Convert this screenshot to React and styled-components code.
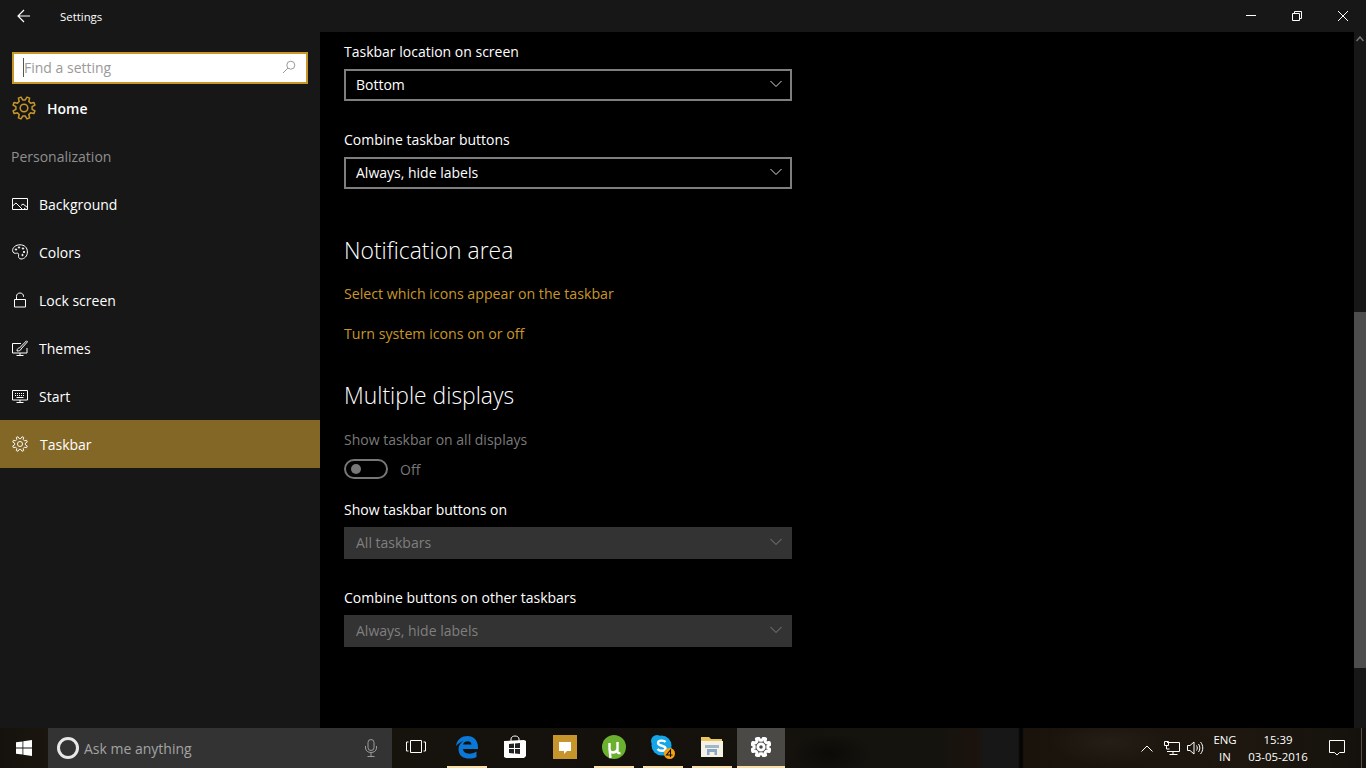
import styled, { createGlobalStyle } from "styled-components";

const GlobalStyle = createGlobalStyle`
  html, body {
    margin: 0;
    padding: 0;
    height: 100%;
    background: #000;
    overflow: hidden;
  }
  #root {
    height: 100%;
  }
  * {
    box-sizing: border-box;
  }
`;

const Page = styled.div`
  display: flex;
  flex-direction: column;
  width: 1366px;
  height: 768px;
  font-family: "Open Sans", "Noto Sans", sans-serif;
  font-size: 14px;
  color: #fff;
`;

const TitleBar = styled.div`
  display: flex;
  align-items: center;
  flex: 0 0 32px;
  background: #171717;
`;

const BackButton = styled.div`
  display: flex;
  align-items: center;
  justify-content: center;
  width: 48px;
  height: 32px;
`;

const AppTitle = styled.span`
  margin-left: 12px;
  font-size: 11.4px;
  flex: 1;
`;

const WindowButton = styled.div`
  display: flex;
  align-items: center;
  justify-content: center;
  width: 46px;
  height: 32px;
`;

const Main = styled.div`
  display: flex;
  flex: 1;
  min-height: 0;
`;

const Sidebar = styled.nav`
  flex: 0 0 320px;
  background: #171717;
  padding-top: 20px;
`;

const SearchBox = styled.div`
  display: flex;
  align-items: center;
  justify-content: space-between;
  height: 32px;
  margin: 0 12px;
  padding: 0 10px 2px 9px;
  background: #fff;
  border: 2px solid #c8962a;
`;

const SearchHint = styled.span`
  border-left: 1px solid #555;
  font-size: 14px;
  line-height: 19px;
  color: #9a9a9a;
`;

const HomeRow = styled.div`
  display: flex;
  align-items: center;
  gap: 11px;
  height: 48px;
  padding-left: 12px;
  font-size: 14px;
  font-weight: 600;
`;

const GroupTitle = styled.div`
  height: 48px;
  padding-left: 11px;
  font-size: 14px;
  line-height: 50px;
  color: #8f8f8f;
`;

const NavItem = styled.div`
  display: flex;
  align-items: center;
  gap: ${({ $active }) => ($active ? 12 : 11)}px;
  height: 48px;
  padding-left: 12px;
  background: ${({ $active }) => ($active ? "#836726" : "transparent")};
`;

const NavIcon = styled.svg`
  width: 16px;
  height: 16px;
  flex: none;
  fill: none;
  stroke: #fff;
  stroke-width: 1;
`;

const Content = styled.main`
  flex: 1;
  padding: 9px 0 0 24px;
  background: #000;
`;

const Label = styled.div`
  height: 20px;
  margin-top: ${({ $top }) => $top || 0}px;
  line-height: 22px;
  color: ${({ $dim }) => ($dim ? "#7a7a7a" : "#fff")};
`;

const Select = styled.div`
  display: flex;
  align-items: center;
  justify-content: space-between;
  width: 448px;
  height: 32px;
  margin-top: 8px;
  padding: 0 8px 2px 10px;
  color: ${({ $disabled }) => ($disabled ? "#7f7f7f" : "#fff")};
  background: ${({ $disabled }) => ($disabled ? "#333" : "#000")};
  border: 2px solid ${({ $disabled }) => ($disabled ? "#333" : "#7e7e7e")};
`;

const Heading = styled.h2`
  margin: ${({ $top }) => $top}px 0 0;
  font-size: 22.9px;
  font-weight: 300;
  line-height: 32px;
`;

const SettingLink = styled.a`
  display: block;
  height: 20px;
  margin-top: ${({ $top }) => $top}px;
  font-size: 14.2px;
  line-height: 22px;
  color: #c8962a;
`;

const ToggleRow = styled.div`
  display: flex;
  align-items: center;
  gap: 12px;
  height: 20px;
  margin-top: 10px;
  color: #777;
`;

const ToggleTrack = styled.span`
  display: flex;
  align-items: center;
  width: 44px;
  height: 20px;
  padding-left: 5px;
  border: 2px solid #777;
  border-radius: 10px;
`;

const ToggleKnob = styled.span`
  width: 10px;
  height: 10px;
  border-radius: 50%;
  background: #777;
`;

const ScrollTrack = styled.div`
  display: flex;
  flex-direction: column;
  flex: 0 0 12px;
  background: #171717;
`;

const ScrollArrow = styled.div`
  display: flex;
  justify-content: center;
  padding-top: 4px;
  height: 12px;
`;

const ScrollThumb = styled.div`
  height: 356px;
  margin-top: 268px;
  background: #4d4d4d;
`;

// wallpaper showing through the taskbar
const Taskbar = styled.footer`
  display: flex;
  align-items: stretch;
  flex: 0 0 40px;
  background:
    radial-gradient(ellipse 60px 24px at 1110px 14px, #241e16 0%, transparent 100%),
    radial-gradient(ellipse 40px 20px at 830px 26px, #0c0a07 0%, transparent 100%),
    linear-gradient(
      90deg,
      #15120d 0,
      #1a150e 48px,
      #14110c 600px,
      #15130e 940px,
      #1b120c 975px,
      #171717 985px,
      #171717 1018px,
      #050505 1020px,
      #050505 1022px,
      #1a130c 1024px,
      #1d170f 1240px,
      #14110c 1366px
    );
`;

const StartButton = styled.div`
  display: flex;
  align-items: center;
  justify-content: center;
  flex: 0 0 48px;
`;

const CortanaBox = styled.div`
  display: flex;
  align-items: center;
  flex: 0 0 344px;
  padding: 0 14px 0 9px;
  background: #333;
  color: #a3a3a3;
`;

const CortanaRing = styled.span`
  width: 22px;
  height: 22px;
  margin-right: 5px;
  border: 3px solid #e8e8e8;
  border-radius: 50%;
`;

const CortanaHint = styled.span`
  flex: 1;
`;

const TaskButton = styled.div`
  display: flex;
  align-items: center;
  justify-content: center;
  flex: 0 0 ${({ $width }) => $width || 48}px;
  margin-left: ${({ $gap }) => $gap || 0}px;
  background: ${({ $active }) => ($active ? "#4a4946" : "transparent")};
  border-bottom: 2px solid ${({ $running }) => ($running ? "#fbdda6" : "transparent")};
`;

const Tray = styled.div`
  display: flex;
  align-items: center;
  margin-left: auto;
  font-size: 11.4px;
`;

const TrayIcon = styled.div`
  display: flex;
  align-items: center;
  justify-content: center;
  width: ${({ $width }) => $width}px;
`;

const TrayText = styled.div`
  width: ${({ $width }) => $width}px;
  line-height: 17px;
  text-align: center;
`;

const DesktopEdge = styled.div`
  width: 1px;
  height: 40px;
  margin-right: 4px;
  background: #55524c;
`;

function gearPath(c, outer, inner) {
  const teeth = 8;
  const step = (Math.PI * 2) / teeth;
  let d = "";
  for (let i = 0; i < teeth; i++) {
    const a = i * step + step / 2;
    const pts = [
      [inner, a - step * 0.3],
      [outer, a - step * 0.16],
      [outer, a + step * 0.16],
      [inner, a + step * 0.3],
    ];
    pts.forEach(([r, t], j) => {
      const x = (c + r * Math.cos(t)).toFixed(2);
      const y = (c + r * Math.sin(t)).toFixed(2);
      d += `${i === 0 && j === 0 ? "M" : "L"}${x} ${y} `;
    });
  }
  return d + "Z";
}

function Gear({ size, color, width = 1 }) {
  return (
    <svg width={size} height={size} viewBox="0 0 24 24" fill="none" stroke={color} strokeWidth={width} strokeLinejoin="round">
      <path d={gearPath(12, 11.3, 8.2)} />
      <circle cx="12" cy="12" r="3.8" />
    </svg>
  );
}

function BackIcon() {
  return (
    <svg width="14" height="14" viewBox="0 0 14 14" fill="none" stroke="#fff" strokeWidth="1.2">
      <path d="M1 7h12M7 1L1 7l6 6" />
    </svg>
  );
}

function SearchIcon() {
  return (
    <svg width="14" height="14" viewBox="0 0 14 14" fill="none" stroke="#9a9a9a" strokeWidth="1">
      <circle cx="8.8" cy="5.2" r="4" />
      <path d="M6 8L1 13" />
    </svg>
  );
}

function Chevron({ color }) {
  return (
    <svg width="12" height="8" viewBox="0 0 12 8" fill="none" stroke={color} strokeWidth="1">
      <path d="M.5 1L6 6.5 11.500 1" />
    </svg>
  );
}

const navItems = [
  {
    label: "Background",
    icon: (
      <NavIcon viewBox="0 0 16 16">
        <path d="M.5 2.500h15v11H.5z" />
        <path d="M.5 10l3.500-3 6 6M9 9.500l2-1.500 4.500 3.500M12 12l2 1.500" />
      </NavIcon>
    ),
  },
  {
    label: "Colors",
    icon: (
      <NavIcon viewBox="0 0 16 16">
        <path d="M8 .8C3.600.8.600 3.400.600 6.600c0 2.600 2.400 3 4 2.600 1.400-.3 2.400.5 2 1.900-.5 1.800.4 3.900 2.400 3.900 3.500 0 6.400-3 6.400-7C15.400 3.500 12.400.8 8 .8z" />
        <circle cx="4" cy="5.500" r=".7" fill="#fff" />
        <circle cx="7" cy="3.500" r=".7" fill="#fff" />
        <circle cx="11" cy="4.500" r=".7" fill="#fff" />
        <circle cx="12" cy="8" r=".7" fill="#fff" />
        <circle cx="10.500" cy="11" r=".7" fill="#fff" />
      </NavIcon>
    ),
  },
  {
    label: "Lock screen",
    icon: (
      <NavIcon viewBox="0 0 16 16">
        <path d="M2.500 7.500h11v7.500h-11z" />
        <path d="M4.500 7.500V4.300C4.500 2.300 6 1 8 1s3.500 1.300 3.500 3.300v.7" />
      </NavIcon>
    ),
  },
  {
    label: "Themes",
    icon: (
      <NavIcon viewBox="0 0 16 16">
        <path d="M9 3.500H.5v9.500h14.500V8M8 13v2M4.500 15.500h7" />
        <path d="M5 11c0-2 1-3 2.500-3L14.500.8l1 1L9 9c0 1.500-2 2-4 2z" />
      </NavIcon>
    ),
  },
  {
    label: "Start",
    icon: (
      <NavIcon viewBox="0 0 16 16">
        <path d="M.5 2.500h15v9.500H.5zM8 12v2.500M4.500 14.500h7" />
        <path d="M3 5.500h10M3 7.500h10" strokeDasharray="1 1" />
        <path d="M4.500 9.500h7" />
      </NavIcon>
    ),
  },
];

function EdgeIcon() {
  return (
    <svg width="24" height="24" viewBox="0 0 24 24">
      <path fill="#0a78d7" d="M1 11C2 4 7 1 12.500 1 19 1 23.500 5.500 23 14H8c.3 4.500 7 6.500 13.500 2.500v5.500c-6 3-18 2.500-18-8 0-3.500 2-6 5-8-2.500.8-6 3-7.500 5zM8 9.500h8.500C16.500 5 9 5 8 9.500z" />
    </svg>
  );
}

function StoreIcon() {
  return (
    <svg width="22" height="24" viewBox="0 0 22 24">
      <path fill="none" stroke="#fff" d="M7 6V4c0-4 8-4 8 0v2" />
      <path fill="#fff" d="M0 6l20-1 2 1v15l-2 2H2l-2-1z" />
      <path fill="#222" d="M5 9l5-.5V13H5zM11 8.500l5-.5v5h-5zM5 14h5v4.500l-5-.5zM11 14h5v5l-5-.5z" />
    </svg>
  );
}

function ChatIcon() {
  return (
    <svg width="24" height="24" viewBox="0 0 24 24">
      <rect width="24" height="24" fill="#c6962c" />
      <path fill="#fff" d="M6 7h12v9h-4l-3 3v-3H6z" />
    </svg>
  );
}

function TorrentIcon() {
  return (
    <svg width="24" height="24" viewBox="0 0 24 24">
      <circle cx="12" cy="12" r="12" fill="#6bb02f" />
      <path fill="none" stroke="#fff" strokeWidth="2.400" d="M7.500 8v6c0 4.500 6.500 4.500 8 .5V7M7.500 14l1 9M15.500 7v9c0 2 1 2.500 3 2" />
    </svg>
  );
}

function SkypeIcon() {
  return (
    <svg width="26" height="26" viewBox="0 0 26 26">
      <circle cx="7" cy="7" r="6" fill="#14a6e6" />
      <circle cx="16" cy="16" r="6" fill="#14a6e6" />
      <circle cx="11.500" cy="11.500" r="10" fill="#14a6e6" />
      <path fill="none" stroke="#fff" strokeWidth="2.400" d="M15.500 8C14 6 8 6 8 9c0 3.500 7.500 2 7.500 5.500 0 3-6 3-8 .5" />
      <circle cx="19.500" cy="19.500" r="5.500" fill="#f7a20e" />
      <path fill="none" stroke="#111" strokeWidth="1.100" d="M20.500 23v-7l-4 5h6" />
    </svg>
  );
}

function ExplorerIcon() {
  return (
    <svg width="24" height="24" viewBox="0 0 24 24">
      <path fill="#eac65c" d="M1 2h8l2 2h11v4H1z" />
      <path fill="#f5f1e4" d="M1 6h22v16H1z" />
      <path fill="#88a6c8" d="M7 20v-6h10v6h-2.500v-3h-5v3z" />
      <path fill="#a3b5c8" d="M5 10h14v3H5z" />
    </svg>
  );
}

export default function App() {
  return (
    <Page>
      <GlobalStyle />
      <TitleBar>
        <BackButton>
          <BackIcon />
        </BackButton>
        <AppTitle>Settings</AppTitle>
        <WindowButton>
          <svg width="10" height="2" viewBox="0 0 10 2"><path d="M0 .5h10" stroke="#fff" /></svg>
        </WindowButton>
        <WindowButton>
          <svg width="10" height="10" viewBox="0 0 10 10" fill="none" stroke="#fff">
            <path d="M.5 2.500h7v7h-7zM2.500 2.500V.5h7v7h-2" />
          </svg>
        </WindowButton>
        <WindowButton>
          <svg width="10" height="10" viewBox="0 0 10 10" fill="none" stroke="#fff">
            <path d="M0 0l10 10M10 0L0 10" />
          </svg>
        </WindowButton>
      </TitleBar>

      <Main>
        <Sidebar>
          <SearchBox>
            <SearchHint>Find a setting</SearchHint>
            <SearchIcon />
          </SearchBox>
          <HomeRow>
            <Gear size={24} color="#c8962a" width={1.5} />
            Home
          </HomeRow>
          <GroupTitle>Personalization</GroupTitle>
          {navItems.map((item) => (
            <NavItem key={item.label}>
              {item.icon}
              {item.label}
            </NavItem>
          ))}
          <NavItem $active>
            <Gear size={16} color="#fff" width={1.4} />
            Taskbar
          </NavItem>
        </Sidebar>

        <Content>
          <Label>Taskbar location on screen</Label>
          <Select>
            Bottom
            <Chevron color="#d8d8d8" />
          </Select>
          <Label $top={28}>Combine taskbar buttons</Label>
          <Select>
            Always, hide labels
            <Chevron color="#d8d8d8" />
          </Select>

          <Heading $top={46}>Notification area</Heading>
          <SettingLink $top={16}>Select which icons appear on the taskbar</SettingLink>
          <SettingLink $top={20}>Turn system icons on or off</SettingLink>

          <Heading $top={37}>Multiple displays</Heading>
          <Label $top={17} $dim>Show taskbar on all displays</Label>
          <ToggleRow>
            <ToggleTrack>
              <ToggleKnob />
            </ToggleTrack>
            Off
          </ToggleRow>
          <Label $top={20}>Show taskbar buttons on</Label>
          <Select $disabled>
            All taskbars
            <Chevron color="#7f7f7f" />
          </Select>
          <Label $top={28}>Combine buttons on other taskbars</Label>
          <Select $disabled>
            Always, hide labels
            <Chevron color="#7f7f7f" />
          </Select>
        </Content>

        <ScrollTrack>
          <ScrollArrow>
            <svg width="8" height="6" viewBox="0 0 8 6" fill="none" stroke="#777" strokeWidth="1.500">
              <path d="M.5 5L4 1l3.500 4" />
            </svg>
          </ScrollArrow>
          <ScrollThumb />
        </ScrollTrack>
      </Main>

      <Taskbar>
        <StartButton>
          <svg width="16" height="16" viewBox="0 0 16 16" fill="#fff">
            <path d="M0 2.300l6.500-.9v6.200H0zM7.300 1.300L16 0v7.600H7.300zM0 8.400h6.500v6.200L0 13.700zM7.300 8.400H16V16l-8.700-1.300z" />
          </svg>
        </StartButton>
        <CortanaBox>
          <CortanaRing />
          <CortanaHint>Ask me anything</CortanaHint>
          <svg width="14" height="18" viewBox="0 0 14 18" fill="none" stroke="#9a9a9a">
            <rect x="4" y=".5" width="6" height="11" rx="3" />
            <path d="M1.500 7v2c0 6 11 6 11 0V7M7 14v3M3.500 17.500h7" />
          </svg>
        </CortanaBox>
        <TaskButton>
          <svg width="20" height="14" viewBox="0 0 20 14" fill="none" stroke="#fff">
            <path d="M4.500.5h11v12h-11zM2.500 2H.5v9h2M17.500 2h2v9h-2" />
          </svg>
        </TaskButton>
        <TaskButton $running $gap={7} $width={40}>
          <EdgeIcon />
        </TaskButton>
        <TaskButton $width={56}>
          <StoreIcon />
        </TaskButton>
        <TaskButton $width={44}>
          <ChatIcon />
        </TaskButton>
        <TaskButton $running $gap={7} $width={40}>
          <TorrentIcon />
        </TaskButton>
        <TaskButton $running $gap={9} $width={40}>
          <SkypeIcon />
        </TaskButton>
        <TaskButton $running $gap={9} $width={40}>
          <ExplorerIcon />
        </TaskButton>
        <TaskButton $running $active $gap={5}>
          <Gear size={20} color="#fff" width={3.4} />
        </TaskButton>

        <Tray>
          <TrayIcon $width={24}>
            <svg width="12" height="7" viewBox="0 0 12 7" fill="none" stroke="#fff">
              <path d="M.5 6.500L6 1l5.500 5.500" />
            </svg>
          </TrayIcon>
          <TrayIcon $width={25}>
            <svg width="16" height="14" viewBox="0 0 16 14" fill="none" stroke="#fff">
              <path d="M3 1.500h12.500v9h-12.500M9 10.500v3M5.500 13.500h8M.5.500h4v4h-4zM2.500 4.500V8h3" />
            </svg>
          </TrayIcon>
          <TrayIcon $width={22}>
            <svg width="17" height="14" viewBox="0 0 17 14" fill="none" stroke="#fff">
              <path d="M.5 4.500h2.500L7 1v12L3 9.500H.5zM9.500 4.500c1 1.500 1 3.500 0 5M11.500 3c1.800 2.500 1.800 5.500 0 8M13.500 1c3 3.500 3 8.500 0 12" />
            </svg>
          </TrayIcon>
          <TrayText $width={38}>
            ENG
            <br />
            IN
          </TrayText>
          <TrayText $width={68}>
            15:39
            <br />
            03-05-2016
          </TrayText>
          <TrayIcon $width={49}>
            <svg width="16" height="16" viewBox="0 0 16 16" fill="none" stroke="#fff">
              <path d="M.5.500h15v12h-5L8 15l-2.500-2.500h-5z" />
            </svg>
          </TrayIcon>
          <DesktopEdge />
        </Tray>
      </Taskbar>
    </Page>
  );
}
